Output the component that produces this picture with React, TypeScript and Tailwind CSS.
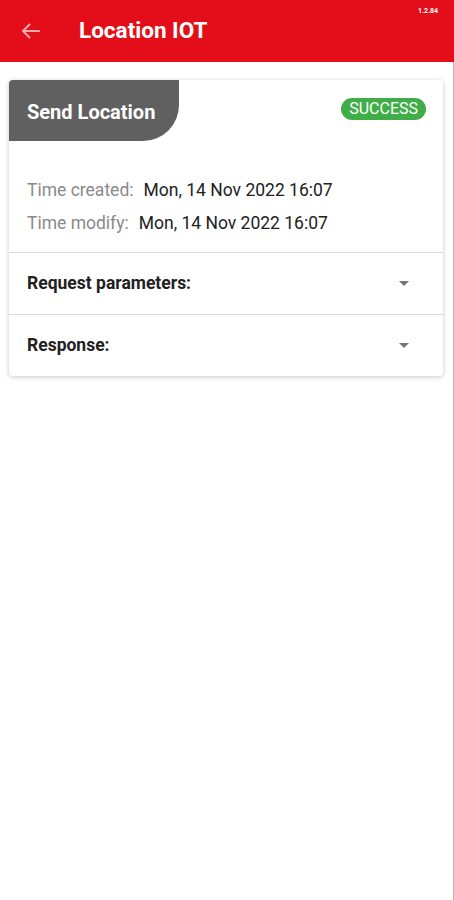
import { useState } from "react";

function Caret() {
  return (
    <svg width="10" height="5" viewBox="0 0 10 5" className="text-[#757575]">
      <path d="M0 0 L10 0 L5 5 Z" fill="currentColor" />
    </svg>
  );
}

function Section({ title }: { title: string }) {
  const [open, setOpen] = useState(false);
  return (
    <button
      type="button"
      onClick={() => setOpen(!open)}
      className="flex h-[62px] w-full items-center justify-between border-t border-[#dcdcdc] pl-[18px] pr-[34px] text-left"
    >
      <span className="text-[17.5px] font-bold text-[#212121]">{title}</span>
      <Caret />
    </button>
  );
}

export default function App() {
  return (
    <div
      className="flex h-[900px] w-[454px] flex-col bg-white"
      style={{ fontFamily: "Roboto, 'Noto Sans', sans-serif" }}
    >
      <header className="relative flex h-[62px] shrink-0 items-center bg-[#e40e1b] pl-[21px]">
        <svg width="20" height="18" viewBox="0 0 20 18" fill="none" stroke="#f7a9ae" strokeWidth="2">
          <path d="M19 9 H2 M9 2 L2 9 L9 16" />
        </svg>
        <h1 className="ml-[38px] text-[22.5px] font-bold text-white">Location IOT</h1>
        <span className="absolute right-[16px] top-[6px] text-[7px] font-bold text-white">1.2.84</span>
      </header>

      <div className="flex flex-1 flex-col border-r border-[#b4b4b4] pr-[1px]">
        <div className="mx-[9px] mt-[18px] overflow-hidden rounded-[4px] bg-white shadow-[0_1px_5px_rgba(0,0,0,0.22)]">
          <div className="flex items-start justify-between">
            <div className="flex h-[61px] w-[170px] items-center rounded-br-[36px] bg-[#606060] pl-[18px] pt-[2px]">
              <span className="text-[20px] font-bold text-white">Send Location</span>
            </div>
            <span className="mr-[17px] mt-[18px] rounded-full bg-[#3fae49] px-[8px] py-[1px] text-[16px] leading-[20px] text-white">
              SUCCESS
            </span>
          </div>
          <div className="flex flex-col gap-[10px] px-[18px] pb-[17px] pt-[38px] text-[17.5px] leading-[23px]">
            <div className="flex gap-[10px]">
              <span className="text-[#8a8a8a]">Time created:</span>
              <span className="text-[#212121]">Mon, 14 Nov 2022 16:07</span>
            </div>
            <div className="flex gap-[10px]">
              <span className="text-[#8a8a8a]">Time modify:</span>
              <span className="text-[#212121]">Mon, 14 Nov 2022 16:07</span>
            </div>
          </div>
          <Section title="Request parameters:" />
          <Section title="Response:" />
        </div>
      </div>
    </div>
  );
}
